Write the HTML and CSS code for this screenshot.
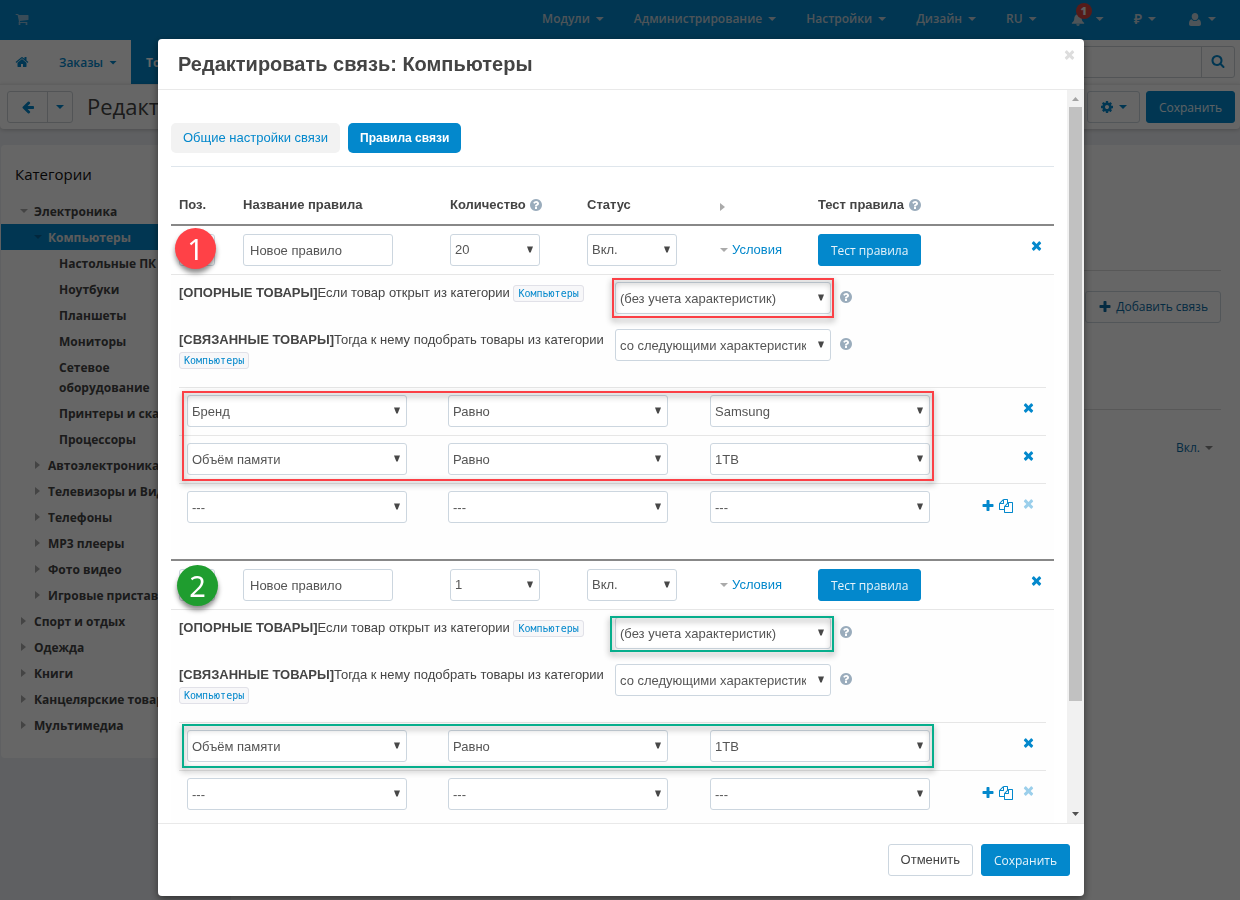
FILE: index.html
```html
<!DOCTYPE html>
<html lang="ru">
<head>
<meta charset="utf-8">
<title>Редактировать связь: Компьютеры</title>
<link rel="stylesheet" href="styles.css">
</head>
<body>
<svg class="sprite" aria-hidden="true">
  <symbol id="cart" viewBox="0 0 1792 1792"><path d="M704 1536q0 52-38 90t-90 38-90-38-38-90 38-90 90-38 90 38 38 90zm896 0q0 52-38 90t-90 38-90-38-38-90 38-90 90-38 90 38 38 90zm128-1088v512q0 24-16.500 42.500t-40.500 21.500l-1044 122q13 60 13 70 0 16-24 64h920q26 0 45 19t19 45-19 45-45 19h-1024q-26 0-45-19t-19-45q0-11 8-31.500t16-36 21.500-40 15.500-29.500l-177-823h-204q-26 0-45-19t-19-45 19-45 45-19h256q16 0 28.500 6.500t19.500 15.500 13 24.500 8 26 5.500 29.500 4.500 26h1201q26 0 45 19t19 45z"/></symbol>
  <symbol id="home" viewBox="0 0 1792 1792"><path d="M1472 992v480q0 26-19 45t-45 19h-384v-384h-256v384h-384q-26 0-45-19t-19-45v-480q0-1 .5-3t.5-3l575-474 575 474q1 2 1 6zm223-69l-62 74q-8 9-21 11h-3q-13 0-21-7l-692-577-692 577q-12 8-24 7-13-2-21-11l-62-74q-8-10-7-23.500t11-21.500l719-599q32-26 76-26t76 26l244 204v-195q0-14 9-23t23-9h192q14 0 23 9t9 23v408l219 182q10 8 11 21.500t-7 23.500z"/></symbol>
  <symbol id="search" viewBox="0 0 1792 1792"><path d="M1216 832q0-185-131.500-316.500t-316.500-131.500-316.500 131.500-131.500 316.500 131.500 316.500 316.500 131.500 316.500-131.500 131.500-316.500zm512 832q0 52-38 90t-90 38q-54 0-90-38l-343-342q-179 124-399 124-143 0-273.500-55.500t-225-150-150-225-55.500-273.500 55.500-273.500 150-225 225-150 273.500-55.500 273.500 55.500 225 150 150 225 55.500 273.500q0 220-124 399l343 343q37 37 37 90z"/></symbol>
  <symbol id="back" viewBox="0 0 1792 1792"><path d="M1664 896v128q0 53-32.500 90.500t-84.500 37.500h-704l293 294q38 36 38 90t-38 90l-75 76q-37 37-90 37-52 0-91-37l-651-652q-37-37-37-90 0-52 37-91l651-650q38-38 91-38 52 0 90 38l75 74q38 38 38 91t-38 91l-293 293h704q52 0 84.500 37.500t32.500 90.500z"/></symbol>
  <symbol id="cog" viewBox="0 0 1792 1792"><path d="M1152 896q0-106-75-181t-181-75-181 75-75 181 75 181 181 75 181-75 75-181zm512-109v222q0 12-8 23t-20 13l-185 28q-19 54-39 91 35 50 107 138 10 12 10 25t-9 23q-27 37-99 108t-94 71q-12 0-26-9l-138-108q-44 23-91 38-16 136-29 186-7 28-36 28h-222q-14 0-24.500-8.500t-11.500-21.500l-28-184q-49-16-90-37l-141 107q-10 9-25 9-14 0-25-11-126-114-165-168-7-10-7-23 0-12 8-23 15-21 51-66.500t54-70.500q-27-50-41-99l-183-27q-13-2-21-12.500t-8-23.500v-222q0-12 8-23t19-13l186-28q14-46 39-92-40-57-107-138-10-12-10-24 0-10 9-23 26-36 98.500-107.500t94.500-71.500q13 0 26 10l138 107q44-23 91-38 16-136 29-186 7-28 36-28h222q14 0 24.500 8.500t11.500 21.500l28 184q49 16 90 37l142-107q9-9 24-9 13 0 25 10 129 119 165 170 7 8 7 22 0 12-8 23-15 21-51 66.500t-54 70.500q26 50 41 98l183 28q13 2 21 12.500t8 23.500z"/></symbol>
  <symbol id="plus" viewBox="0 0 1792 1792"><path d="M1600 736v192q0 40-28 68t-68 28h-416v416q0 40-28 68t-68 28h-192q-40 0-68-28t-28-68v-416h-416q-40 0-68-28t-28-68v-192q0-40 28-68t68-28h416v-416q0-40 28-68t68-28h192q40 0 68 28t28 68v416h416q40 0 68 28t28 68z"/></symbol>
  <symbol id="times" viewBox="192 192 1408 1408"><path d="M1490 1322q0 40-28 68l-136 136q-28 28-68 28t-68-28l-294-294-294 294q-28 28-68 28t-68-28l-136-136q-28-28-28-68t28-68l294-294-294-294q-28-28-28-68t28-68l136-136q28-28 68-28t68 28l294 294 294-294q28-28 68-28t68 28l136 136q28 28 28 68t-28 68l-294 294 294 294q28 28 28 68z"/></symbol>
  <symbol id="help" viewBox="128 128 1536 1536"><path d="M1024 1376v-192q0-14-9-23t-23-9h-192q-14 0-23 9t-9 23v192q0 14 9 23t23 9h192q14 0 23-9t9-23zm256-672q0-88-55.500-163t-138.500-116-170-41q-243 0-371 213-15 24 8 42l132 100q7 6 19 6 16 0 25-12 53-68 86-92 34-24 86-24 48 0 85.500 26t37.500 59q0 38-20 61t-68 45q-63 28-115.500 86.500t-52.500 125.500v36q0 14 9 23t23 9h192q14 0 23-9t9-23q0-19 21.500-49.500t54.500-49.500q32-18 49-28.500t46-35 44.500-48 28-60.500 12.500-81zm384 192q0 209-103 385.500t-279.500 279.500-385.500 103-385.500-103-279.500-279.500-103-385.500 103-385.500 279.500-279.500 385.500-103 385.500 103 279.500 279.500 103 385.500z"/></symbol>
  <symbol id="copy" viewBox="0 0 1792 1792"><path d="M1696 384q40 0 68 28t28 68v1216q0 40-28 68t-68 28h-960q-40 0-68-28t-28-68v-288h-544q-40 0-68-28t-28-68v-672q0-40 20-88t48-76l408-408q28-28 76-48t88-20h416q40 0 68 28t28 68v328q68-40 128-40h416zm-544 213l-299 299h299v-299zm-640-384l-299 299h299v-299zm196 647l316-316v-416h-384v416q0 40-28 68t-68 28h-416v640h512v-256q0-40 20-88t48-76zm956 804v-1152h-384v416q0 40-28 68t-68 28h-416v640h896z"/></symbol>
  <symbol id="bell" viewBox="0 0 14 14"><path d="M7 .5c.7 0 1.200.5 1.200 1.200C10 2.300 10.800 3.800 11 6c.2 2.200.8 3.500 2.600 4.600v.9H.4v-.9C2.200 9.500 2.800 8.200 3 6c.2-2.200 1-3.700 2.800-4.300C5.800 1 6.300.5 7 .5zM5.200 12h3.600c0 1-.8 1.700-1.800 1.700S5.200 13 5.200 12z"/></symbol>
  <symbol id="user" viewBox="0 0 12 13"><path d="M6 0c1.900 0 3.300 1.500 3.300 3.500S7.900 7.200 6 7.200 2.700 5.500 2.700 3.500 4.100 0 6 0zM2.700 6.200c.8 1.200 1.900 1.900 3.300 1.900s2.500-.7 3.300-1.900c2 .3 2.700 2.200 2.700 4.800 0 1.300-.8 2-1.900 2H1.900C.8 13 0 12.300 0 11c0-2.600.7-4.500 2.700-4.800z"/></symbol>
</svg>

<div class="page">
  <header class="topbar">
    <a class="brand" href="#" aria-label="Магазин"><svg><use href="#cart"/></svg></a>
    <nav class="topmenu">
      <a href="#">Модули<i class="caret"></i></a>
      <a href="#">Администрирование<i class="caret"></i></a>
      <a href="#">Настройки<i class="caret"></i></a>
      <a href="#">Дизайн<i class="caret"></i></a>
      <a href="#">RU<i class="caret"></i></a>
      <a href="#" class="bell" aria-label="Уведомления"><svg><use href="#bell"/></svg><b>1</b><i class="caret"></i></a>
      <a href="#" class="money">₽<i class="caret"></i></a>
      <a href="#" aria-label="Профиль"><svg><use href="#user"/></svg><i class="caret"></i></a>
    </nav>
  </header>
  <div class="subnav">
    <a href="#" class="home" aria-label="Главная"><svg><use href="#home"/></svg></a>
    <a href="#" class="orders">Заказы<i class="caret"></i></a>
    <a href="#" class="current">Товары</a>
    <form class="search"><input type="search" aria-label="Поиск"><button type="button" aria-label="Найти"><svg><use href="#search"/></svg></button></form>
  </div>
  <div class="titlebar">
    <div class="group"><button class="back" aria-label="Назад"><svg><use href="#back"/></svg></button><button class="drop" aria-label="Ещё"><i class="caret"></i></button></div>
    <h1>Редактирование</h1>
    <button class="btn gear" aria-label="Действия"><svg><use href="#cog"/></svg><i class="caret"></i></button>
    <button class="btn primary">Сохранить</button>
  </div>
  <div class="columns">
    <aside class="sidebar">
      <h2>Категории</h2>
      <ul>
        <li class="l1 open"><a href="#">Электроника</a></li>
        <li class="l2 open active"><a href="#">Компьютеры</a></li>
        <li class="l3"><a href="#">Настольные ПК</a></li>
        <li class="l3"><a href="#">Ноутбуки</a></li>
        <li class="l3"><a href="#">Планшеты</a></li>
        <li class="l3"><a href="#">Мониторы</a></li>
        <li class="l3"><a href="#">Сетевое<br>оборудование</a></li>
        <li class="l3"><a href="#">Принтеры и сканеры</a></li>
        <li class="l3"><a href="#">Процессоры</a></li>
        <li class="l2"><a href="#">Автоэлектроника</a></li>
        <li class="l2"><a href="#">Телевизоры и Видео</a></li>
        <li class="l2"><a href="#">Телефоны</a></li>
        <li class="l2"><a href="#">MP3 плееры</a></li>
        <li class="l2"><a href="#">Фото видео</a></li>
        <li class="l2"><a href="#">Игровые приставки</a></li>
        <li class="l1"><a href="#">Спорт и отдых</a></li>
        <li class="l1"><a href="#">Одежда</a></li>
        <li class="l1"><a href="#">Книги</a></li>
        <li class="l1"><a href="#">Канцелярские товары</a></li>
        <li class="l1"><a href="#">Мультимедиа</a></li>
      </ul>
    </aside>
    <main class="content">
      <div class="actions"><button class="btn"><svg><use href="#plus"/></svg>Добавить связь</button></div>
      <div class="state"><a href="#">Вкл.<i class="caret"></i></a></div>
    </main>
  </div>
</div>

<div class="overlay">
  <section class="modal" role="dialog" aria-labelledby="dlg-title">
    <header class="modal-head">
      <h2 id="dlg-title">Редактировать связь: Компьютеры</h2>
      <button class="close" aria-label="Закрыть"><svg><use href="#times"/></svg></button>
    </header>
    <div class="modal-body">
      <div class="scroll">
        <nav class="tabs"><a href="#">Общие настройки связи</a><a href="#" class="on">Правила связи</a></nav>
        <table class="rules">
          <colgroup><col class="c-pos"><col class="c-name"><col class="c-qty"><col class="c-status"><col class="c-cond"><col><col class="c-del"></colgroup>
          <thead>
            <tr><th>Поз.</th><th>Название правила</th><th>Количество <svg class="help"><use href="#help"/></svg></th><th>Статус</th><th><i class="tri right"></i></th><th>Тест правила <svg class="help"><use href="#help"/></svg></th><th></th></tr>
          </thead>
          <tbody>
            <tr class="rule">
              <td><div class="pos"><input type="text" aria-label="Позиция"><span class="mark red">1</span></div></td>
              <td><input class="name" type="text" value="Новое правило" aria-label="Название правила"></td>
              <td><select class="short" aria-label="Количество"><option>20</option></select></td>
              <td><select class="short" aria-label="Статус"><option>Вкл.</option></select></td>
              <td><a href="#" class="cond"><i class="tri down"></i>Условия</a></td>
              <td><button class="btn primary">Тест правила</button></td>
              <td class="del"><button class="icon" aria-label="Удалить"><svg><use href="#times"/></svg></button></td>
            </tr>
            <tr class="details"><td colspan="7">
              <div class="line">
                <p><strong>[ОПОРНЫЕ ТОВАРЫ]</strong>Если товар открыт из категории <code>Компьютеры</code></p>
                <div class="pick"><select aria-label="Характеристики опорных товаров"><option>(без учета характеристик)</option></select><span class="frame f-red"></span></div>
                <svg class="help"><use href="#help"/></svg>
              </div>
              <div class="line">
                <p><strong>[СВЯЗАННЫЕ ТОВАРЫ]</strong>Тогда к нему подобрать товары из категории <code>Компьютеры</code></p>
                <div class="pick"><select aria-label="Характеристики связанных товаров"><option>со следующими характеристиками</option></select></div>
                <svg class="help"><use href="#help"/></svg>
              </div>
              <div class="filters">
                <table>
                  <colgroup><col class="f1"><col class="f2"><col class="f1"><col></colgroup>
                  <tr><td><select aria-label="Характеристика"><option>Бренд</option></select></td><td><select aria-label="Условие"><option>Равно</option></select></td><td><select aria-label="Значение"><option>Samsung</option></select></td><td><div class="tools"><button class="icon" aria-label="Удалить"><svg><use href="#times"/></svg></button></div></td></tr>
                  <tr><td><select aria-label="Характеристика"><option>Объём памяти</option></select></td><td><select aria-label="Условие"><option>Равно</option></select></td><td><select aria-label="Значение"><option>1TB</option></select></td><td><div class="tools"><button class="icon" aria-label="Удалить"><svg><use href="#times"/></svg></button></div></td></tr>
                  <tr><td><select aria-label="Характеристика"><option>---</option></select></td><td><select aria-label="Условие"><option>---</option></select></td><td><select aria-label="Значение"><option>---</option></select></td><td><div class="tools"><button class="icon add" aria-label="Добавить"><svg><use href="#plus"/></svg></button><button class="icon dup" aria-label="Копировать"><svg><use href="#copy"/></svg></button><button class="icon" disabled aria-label="Удалить"><svg><use href="#times"/></svg></button></div></td></tr>
                </table>
                <span class="frame rows two f-red"></span>
              </div>
            </td></tr>
            <tr class="rule">
              <td><div class="pos"><input type="text" aria-label="Позиция"><span class="mark green">2</span></div></td>
              <td><input class="name" type="text" value="Новое правило" aria-label="Название правила"></td>
              <td><select class="short" aria-label="Количество"><option>1</option></select></td>
              <td><select class="short" aria-label="Статус"><option>Вкл.</option></select></td>
              <td><a href="#" class="cond"><i class="tri down"></i>Условия</a></td>
              <td><button class="btn primary">Тест правила</button></td>
              <td class="del"><button class="icon" aria-label="Удалить"><svg><use href="#times"/></svg></button></td>
            </tr>
            <tr class="details"><td colspan="7">
              <div class="line">
                <p><strong>[ОПОРНЫЕ ТОВАРЫ]</strong>Если товар открыт из категории <code>Компьютеры</code></p>
                <div class="pick"><select aria-label="Характеристики опорных товаров"><option>(без учета характеристик)</option></select><span class="frame f-green"></span></div>
                <svg class="help"><use href="#help"/></svg>
              </div>
              <div class="line">
                <p><strong>[СВЯЗАННЫЕ ТОВАРЫ]</strong>Тогда к нему подобрать товары из категории <code>Компьютеры</code></p>
                <div class="pick"><select aria-label="Характеристики связанных товаров"><option>со следующими характеристиками</option></select></div>
                <svg class="help"><use href="#help"/></svg>
              </div>
              <div class="filters">
                <table>
                  <colgroup><col class="f1"><col class="f2"><col class="f1"><col></colgroup>
                  <tr><td><select aria-label="Характеристика"><option>Объём памяти</option></select></td><td><select aria-label="Условие"><option>Равно</option></select></td><td><select aria-label="Значение"><option>1TB</option></select></td><td><div class="tools"><button class="icon" aria-label="Удалить"><svg><use href="#times"/></svg></button></div></td></tr>
                  <tr><td><select aria-label="Характеристика"><option>---</option></select></td><td><select aria-label="Условие"><option>---</option></select></td><td><select aria-label="Значение"><option>---</option></select></td><td><div class="tools"><button class="icon add" aria-label="Добавить"><svg><use href="#plus"/></svg></button><button class="icon dup" aria-label="Копировать"><svg><use href="#copy"/></svg></button><button class="icon" disabled aria-label="Удалить"><svg><use href="#times"/></svg></button></div></td></tr>
                </table>
                <span class="frame rows one f-green"></span>
              </div>
            </td></tr>
          </tbody>
        </table>
      </div>
      <div class="scrollbar" aria-hidden="true"><i class="up"></i><span class="track"><span class="thumb"></span></span><i class="dn"></i></div>
    </div>
    <footer class="modal-foot"><button class="btn cancel">Отменить</button><button class="btn primary">Сохранить</button></footer>
  </section>
</div>
</body>
</html>
```
FILE: styles.css
```css
* { box-sizing: border-box; }
body {
  margin: 0;
  background: #eef0f4;
  color: #444;
  font: 13px/20px "Liberation Sans", Arial, sans-serif;
}
h1, h2, p, ul { margin: 0; padding: 0; }
a { color: #0388cc; text-decoration: none; }
svg { fill: currentColor; width: 14px; height: 14px; flex: none; }
.sprite { display: none; }
button, input, select { font: inherit; color: inherit; margin: 0; }
button { cursor: pointer; }

.caret {
  width: 8px;
  height: 4px;
  flex: none;
  background: currentColor;
  clip-path: polygon(0 0, 100% 0, 50% 100%);
}

/* page under the dialog */
.page {
  min-height: 100vh;
  display: flex;
  flex-direction: column;
  font-family: "Open Sans", "Noto Sans", sans-serif;
  font-size: 12px;
}
.topbar {
  height: 40px;
  display: flex;
  align-items: center;
  justify-content: space-between;
  padding: 0 24px 2px 15px;
  background: #0388cc;
}
.topbar a { color: #c4d3dc; font-weight: 600; display: flex; align-items: center; }
.topbar .brand { color: #8fbfdc; }
.topmenu { display: flex; gap: 30px; }
.topmenu .caret { margin-left: 6px; }
.topmenu svg { height: 13px; }
.topmenu .money { font-size: 14px; padding-right: 2px; }
.bell { position: relative; margin-left: 4px; }
.topmenu .bell .caret { margin-left: 11px; }
.bell b {
  position: absolute;
  left: 5px;
  top: -6px;
  width: 16px;
  height: 16px;
  border-radius: 8px;
  background: #d8453f;
  color: #eee;
  font-size: 11px;
  line-height: 16px;
  text-align: center;
}
.subnav {
  height: 44px;
  display: flex;
  align-items: center;
  background: #fff;
  padding-right: 5px;
}
.subnav .home { padding: 0 15px; display: flex; }
.subnav .orders { display: flex; align-items: center; padding: 1px 14px 0 15px; font-weight: 600; }
.orders .caret { margin-left: 6px; }
.subnav .current { align-self: stretch; padding: 13px 15px; background: #0388cc; color: #fff; font-weight: 700; }
.search { margin-left: auto; display: flex; height: 32px; width: 300px; border: 1px solid #cdd3d8; border-radius: 3px; }
.search input { flex: 1; min-width: 0; border: 0; background: none; }
.search button { width: 33px; border: 0; border-left: 1px solid #cdd3d8; background: none; color: #0388cc; padding: 3px 0 0; }
.titlebar {
  height: 45px;
  display: flex;
  align-items: center;
  gap: 6px;
  padding: 0 5px 0 7px;
  background: #fff;
  border-top: 1px solid #eee;
  border-radius: 0 0 4px 4px;
  box-shadow: 0 1px 4px rgba(0, 0, 0, .2);
}
.titlebar h1 { flex: 1; margin-left: 8px; padding-bottom: 3px; font-size: 22px; font-weight: 400; color: #444; }
.group { display: flex; height: 32px; border: 1px solid #cdd3d8; border-radius: 3px; color: #0388cc; }
.group button { border: 0; background: none; color: inherit; padding: 0; display: flex; align-items: center; justify-content: center; }
.group .back { width: 39px; }
.group .drop { width: 25px; border-left: 1px solid #cdd3d8; }
.columns { flex: 1; display: flex; align-items: flex-start; margin-top: 16px; padding-left: 1px; }
.sidebar { width: 230px; padding: 18px 0 20px; background: #fff; border-radius: 4px; }
.sidebar h2 { font-size: 15px; line-height: 22px; font-weight: 500; color: #111; padding-left: 14px; margin-bottom: 13px; }
.sidebar ul { list-style: none; }
.sidebar li { padding: 4px 0 2px; display: flex; white-space: nowrap; }
.sidebar li::before {
  content: "";
  width: 5px;
  height: 8px;
  margin: 5px 8px 0 0;
  background: #aaa;
  clip-path: polygon(0 0, 100% 50%, 0 100%);
}
.sidebar li.open::before { width: 8px; height: 4px; margin: 7px 6px 0 -1px; clip-path: polygon(0 0, 100% 0, 50% 100%); }
.sidebar a { color: #444; font-weight: 700; }
.sidebar .l1 { padding-left: 20px; }
.sidebar .l2 { padding-left: 34px; }
.sidebar .l3 { padding-left: 58px; }
.sidebar .l3::before { display: none; }
.sidebar .active { background: #0388cc; }
.sidebar .active a { color: #e4e4e4; }
.sidebar .active::before { background: #07639a; }
.content { flex: 1; align-self: stretch; padding: 125px 19px 0 20px; background: #fff; }
.actions { border-top: 1px solid #ddd; border-bottom: 1px solid #ddd; padding: 20px 0 86px; display: flex; justify-content: flex-end; }
.actions svg { margin-right: 4px; }
.content .btn { color: #0a6ca5; background: none; }
.state { padding: 28px 8px; display: flex; justify-content: flex-end; }
.state a { display: flex; align-items: center; gap: 5px; color: #0a6ca5; }
.state .caret { color: #888; }

.btn {
  height: 32px;
  padding: 0 12px;
  display: inline-flex;
  align-items: center;
  justify-content: center;
  border: 1px solid #ccd6df;
  border-radius: 3px;
  background: #fff;
  white-space: nowrap;
}
.btn.primary { padding-top: 2px; border-color: #0388cc; background: #0388cc; color: #e6f3fa; font-family: "Open Sans", "Noto Sans", sans-serif; font-size: 12px; }
.gear { gap: 5px; color: #0388cc; }

/* dialog */
.overlay {
  position: fixed;
  inset: 0;
  padding: 39px 156px 4px 158px;
  background: rgba(0, 0, 0, .6);
}
.modal {
  height: 100%;
  display: flex;
  flex-direction: column;
  background: #fff;
  border-radius: 4px;
  box-shadow: 0 3px 9px rgba(0, 0, 0, .5);
}
.modal-head { display: flex; justify-content: space-between; align-items: flex-start; padding: 10px 9px 10px 20px; border-bottom: 1px solid #e9e9e9; }
.modal-head h2 { font-size: 20px; line-height: 30px; }
.close { border: 0; background: none; padding: 0; color: #ddd; display: flex; }
.close svg, .icon svg { width: 11px; height: 11px; }
.modal-body { flex: 1; min-height: 0; display: flex; }
.scroll { flex: 1; min-width: 0; overflow: hidden; padding: 33px 13px 0; }
.scrollbar { width: 17px; display: flex; flex-direction: column; align-items: center; background: #f1f1f1; }
.scrollbar .up, .scrollbar .dn { width: 7px; height: 4px; margin: 7px 0 6px; flex: none; background: #a3a3a3; clip-path: polygon(50% 0, 100% 100%, 0 100%); }
.scrollbar .dn { margin: 6px 0 7px; background: #505050; clip-path: polygon(0 0, 100% 0, 50% 100%); }
.track { flex: 1; width: 13px; }
.thumb { display: block; height: 85%; background: #c1c1c1; }
.modal-foot { display: flex; justify-content: flex-end; gap: 8px; padding: 20px 14px; border-top: 1px solid #e9e9e9; }

.tabs { display: flex; gap: 8px; padding-bottom: 13px; border-bottom: 1px solid #dfe6ec; }
.tabs a { padding: 5px 12px; border-radius: 5px; background: #f2f2f2; }
.tabs .on { background: #0388cc; color: #fff; font-size: 12px; font-weight: 700; }

table { width: 100%; border-collapse: separate; border-spacing: 0; table-layout: fixed; }
.c-pos { width: 64px; }
.c-name { width: 207px; }
.c-qty { width: 137px; }
.c-status { width: 133px; }
.c-cond { width: 98px; }
.c-del { width: 38px; }
th { padding: 28px 8px 9px; border-bottom: 2px solid #888; text-align: left; line-height: 20px; white-space: nowrap; }
.help { width: 12px; height: 12px; color: #9aacbc; vertical-align: -2px; }
th .help { margin-left: 1px; }
td { padding: 0; vertical-align: top; }
.rule td { height: 49px; padding: 8px 8px 0; border-bottom: 1px solid #e6e6e6; }
.rule .del { padding: 14px 12px 0; }
.rule .del button { margin-left: auto; }
input[type="text"] { height: 32px; border: 1px solid #ccd6df; border-radius: 3px; padding: 0 6px; color: #555; background: #fff; }
.name { width: 150px; display: block; }
.pos { position: relative; }
.pos input { width: 36px; display: block; }
.mark {
  position: absolute;
  left: -4px;
  top: -6px;
  width: 41px;
  height: 41px;
  border-radius: 50%;
  background: #ff4147;
  color: #fff;
  font: 29px/41px "Noto Sans", sans-serif;
  text-align: center;
  box-shadow: 0 4px 5px rgba(0, 0, 0, .45);
}
.mark.green { background: #1f9d2f; left: -2px; top: -4px; }
select {
  display: block;
  width: 220px;
  height: 32px;
  padding: 2px 24px 0 4px;
  border: 1px solid #ccd6df;
  border-radius: 3px;
  color: #555;
  appearance: none;
  background: #fff url("data:image/svg+xml,%3Csvg xmlns='http://www.w3.org/2000/svg' width='6' height='7'%3E%3Cpath d='M0 .5h6L3.700 6.500H2.300z' fill='%23484848'/%3E%3C/svg%3E") no-repeat right 6px top 11px;
}
select.short { width: 90px; padding-top: 0; }
.cond { display: flex; align-items: center; gap: 4px; padding: 6px 0 0; }
.tri { display: inline-block; background: #aaa; flex: none; }
.tri.right { width: 5px; height: 8px; vertical-align: -2px; clip-path: polygon(0 0, 100% 50%, 0 100%); }
.tri.down { width: 8px; height: 4px; clip-path: polygon(0 0, 100% 0, 50% 100%); }
.icon { display: flex; border: 0; padding: 0; background: none; color: #0388cc; }
.icon:disabled { color: #9bcfeb; }
.icon.add, .icon.dup { margin-top: 4px; }
.icon.add svg, .icon.dup svg { width: 14px; height: 14px; }
.icon.dup { margin-right: 6px; }

.details > td { padding: 7px 8px 28px; border-bottom: 2px solid #888; background: #fefefe; }
.line { display: grid; grid-template-columns: 427px auto 1fr; gap: 9px; margin-bottom: 15px; }
.line p { padding-top: 1px; }
.line > .help { margin-top: 9px; }
code {
  padding: 2px 4px;
  border: 1px solid #e1e1e8;
  border-radius: 3px;
  background: #f7f7f9;
  color: #0388cc;
  font: 10px/20px "DejaVu Sans Mono", monospace;
}
.pick { position: relative; }
.pick select { width: 216px; }
.frame {
  position: absolute;
  inset: -4px -3px;
  border: 2px solid #fb4046;
  filter: drop-shadow(0 3px 3px rgba(0, 0, 0, .45));
  pointer-events: none;
}
.f-green { inset: -1px -3px -3px -5px; border-color: #06ae8c; }
.filters { position: relative; margin-top: 16px; }
.filters td { height: 48px; padding: 7px 8px 8px; border-top: 1px solid #e6e6e6; }
.f1 { width: 261px; }
.f2 { width: 262px; }
.frame.rows { inset: 4px 112px auto 3px; height: 90px; }
.frame.rows.one { top: 2px; height: 44px; }
.tools { display: flex; justify-content: flex-end; align-items: center; gap: 4px; height: 25px; padding-right: 4px; }
```
